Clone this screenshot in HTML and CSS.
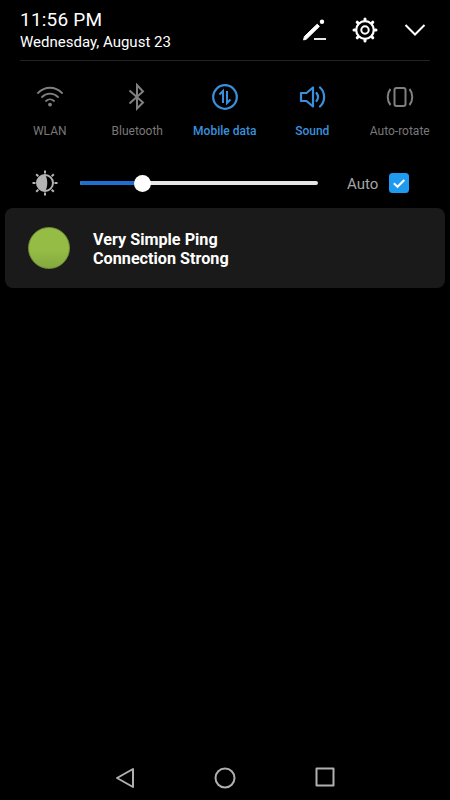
FILE: index.html
```html
<!DOCTYPE html>
<html lang="en">
<head>
<meta charset="utf-8">
<title>Notification shade</title>
<link rel="stylesheet" href="styles.css">
</head>
<body>
<div class="screen">
  <header class="head">
    <div class="clock">
      <div class="time">11:56 PM</div>
      <div class="date">Wednesday, August 23</div>
    </div>
    <div class="actions">
      <svg width="26" height="24" viewBox="0 0 26 24"><path d="M1.600 22 L2.400 18.500 L15.200 6.200 L17.400 8.400 L4.500 21 Z" fill="#fff" stroke="#fff" stroke-width="1" stroke-linejoin="round"/><circle cx="20" cy="3.800" r="2.200" fill="#fff"/><path d="M12 21 H24" stroke="#fff" stroke-width="1.800"/></svg>
      <svg width="26" height="26" viewBox="0 0 26 26"><circle cx="13" cy="13" r="8.800" fill="none" stroke="#fff" stroke-width="2.200"/><circle cx="13" cy="13" r="3.700" fill="none" stroke="#fff" stroke-width="2"/><path d="M13 2V3M13 23V24M2 13H3M23 13H24M5.200 5.200L5.900 5.900M20.100 20.100L20.800 20.800M5.200 20.800L5.900 20.100M20.100 5.900L20.800 5.200" stroke="#fff" stroke-width="3" stroke-linecap="round"/></svg>
      <svg class="chevron" width="22" height="14" viewBox="0 0 22 14"><path d="M1.500 2 L11 11.500 L20.500 2" fill="none" stroke="#fff" stroke-width="2"/></svg>
    </div>
  </header>
  <div class="rule"></div>
  <div class="toggles">
    <div class="toggle">
      <svg width="28" height="28" viewBox="0 0 28 28" fill="none" stroke="#808080" stroke-width="1.800" stroke-linecap="round"><path d="M2 10 C9 3 19 3 26 10"/><path d="M6 14 C10.500 9.500 17.500 9.500 22 14"/><path d="M10 18 C12.300 15.800 15.700 15.800 18 18"/><circle cx="14" cy="21.600" r="1.900" fill="#808080" stroke="none"/></svg>
      <span>WLAN</span>
    </div>
    <div class="toggle">
      <svg width="28" height="28" viewBox="0 0 28 28" fill="none" stroke="#808080" stroke-width="2"><path d="M6.500 7.500 L20 19.500 L14 25.500 V2 L20 8.500 L6.500 20.500"/></svg>
      <span>Bluetooth</span>
    </div>
    <div class="toggle on">
      <svg width="28" height="28" viewBox="0 0 28 28" fill="none" stroke="#3a90dc" stroke-width="2"><circle cx="14" cy="14" r="11.800" stroke-width="2.200"/><path d="M12 20 V8 L8.500 11.500"/><path d="M16 8 V20 L19.500 16.500"/></svg>
      <span>Mobile data</span>
    </div>
    <div class="toggle on">
      <svg class="sound" width="28" height="28" viewBox="0 0 28 28" fill="none" stroke="#3a90dc" stroke-width="2.200" stroke-linejoin="round" stroke-linecap="round"><path d="M2 10 H7.500 L14 4.500 V23.500 L7.500 18 H2 Z"/><path d="M17.500 10 C19.300 12.300 19.300 15.700 17.500 18"/><path d="M21 4.500 C26.500 9.500 26.500 18.500 21 23.500"/></svg>
      <span>Sound</span>
    </div>
    <div class="toggle">
      <svg width="28" height="28" viewBox="0 0 28 28" fill="none" stroke="#808080" stroke-width="2"><rect x="8.500" y="5" width="11" height="18" rx="2"/><path d="M4.500 6 C.8 10.500 .8 17.500 4.500 22"/><path d="M23.500 6 C27.200 10.500 27.200 17.500 23.500 22"/></svg>
      <span>Auto-rotate</span>
    </div>
  </div>
  <div class="bright">
    <svg width="28" height="28" viewBox="0 0 28 28"><circle cx="14" cy="14" r="8" fill="none" stroke="#b4b4b4" stroke-width="2"/><path d="M14 6 A8 8 0 0 0 14 22 C17 19 17 9 14 6Z" fill="#b4b4b4"/><path d="M14 1.500V4.500M14 23.500V26.500M1.500 14H4.500M23.500 14H26.500M5.200 5.200L7.300 7.300M20.700 20.700L22.800 22.800M5.200 22.800L7.300 20.700M20.700 7.300L22.800 5.200" stroke="#b4b4b4" stroke-width="2"/></svg>
    <div class="slider">
      <div class="fill"></div>
      <div class="thumb"></div>
    </div>
    <span class="auto">Auto</span>
    <svg class="check" width="20" height="20" viewBox="0 0 20 20"><rect width="20" height="20" rx="3.500" fill="#1e9af0"/><path d="M4.800 10.300 L8.500 13.800 L15.300 7" fill="none" stroke="#fff" stroke-width="2"/></svg>
  </div>
  <section class="card">
    <div class="dot"></div>
    <div class="msg">
      <div>Very Simple Ping</div>
      <div>Connection Strong</div>
    </div>
  </section>
  <nav class="nav">
    <svg width="20" height="22" viewBox="0 0 20 22" fill="none" stroke="#b0b0b0" stroke-width="2" stroke-linejoin="round"><path d="M18 2 V20 L2 11 Z"/></svg>
    <svg width="22" height="22" viewBox="0 0 22 22" fill="none" stroke="#b0b0b0" stroke-width="2"><circle cx="11" cy="11" r="9.500"/></svg>
    <svg width="20" height="20" viewBox="0 0 20 20" fill="none" stroke="#b0b0b0" stroke-width="2" stroke-linejoin="round"><rect x="1.500" y="1.500" width="17" height="17"/></svg>
  </nav>
</div>
</body>
</html>
```
FILE: styles.css
```css
* { box-sizing: border-box; }
html, body { margin: 0; padding: 0; background: #000; }
.screen {
  width: 450px;
  height: 800px;
  display: flex;
  flex-direction: column;
  background: #000;
  color: #fff;
  font-family: Roboto, "Liberation Sans", sans-serif;
  overflow: hidden;
}
.head {
  display: flex;
  justify-content: space-between;
  padding: 8px 24px 0 20px;
  height: 60px;
}
.time { font-size: 19px; line-height: 23px; letter-spacing: 0.2px; }
.date { font-size: 15px; line-height: 22px; }
.actions { display: flex; align-items: center; gap: 24px; height: 44px; }
.chevron { margin-left: 2px; }
.rule { height: 1px; margin: 0 20px; background: #222; }
.toggles {
  display: grid;
  grid-template-columns: repeat(5, 87.500px);
  padding: 22px 0 0 6px;
  height: 100px;
}
.toggle {
  display: flex;
  flex-direction: column;
  align-items: center;
  height: 60px;
  color: #787878;
  font-size: 12px;
  gap: 13px;
}
.toggle span { line-height: 14px; white-space: nowrap; }
.toggle.on { color: #3a90dc; font-weight: 500; }
.sound { margin-left: 1px; }
.bright {
  display: flex;
  align-items: center;
  padding-left: 31px;
  height: 44px;
}
.slider {
  position: relative;
  width: 238px;
  height: 4px;
  margin-left: 21px;
  background: #e6e6e6;
  border-radius: 2px;
}
.fill { width: 62px; height: 4px; background: #1e6fd0; border-radius: 2px; }
.thumb {
  position: absolute;
  left: 54px;
  top: -6.500px;
  width: 17px;
  height: 17px;
  border-radius: 50%;
  background: #fff;
}
.auto { margin-left: 29px; padding-top: 2px; font-size: 15px; color: #a6a6a6; }
.check { margin-left: 11px; }
.card {
  display: flex;
  align-items: center;
  margin: 3px 5px 0;
  height: 80px;
  background: #1a1a1a;
  border-radius: 8px;
  padding-left: 23px;
}
.dot {
  width: 42px;
  height: 42px;
  border-radius: 50%;
  background: linear-gradient(#95bd46 55%, #84a83e);
  border: 1px solid #6f8c38;
}
.msg { margin-left: 23px; padding-top: 2px; font-size: 16.200px; font-weight: 700; line-height: 19px; }
.nav {
  margin-top: auto;
  height: 33px;
  display: grid;
  grid-template-columns: 20px 22px 20px;
  justify-content: center;
  column-gap: 79px;
  align-items: start;
}
```
